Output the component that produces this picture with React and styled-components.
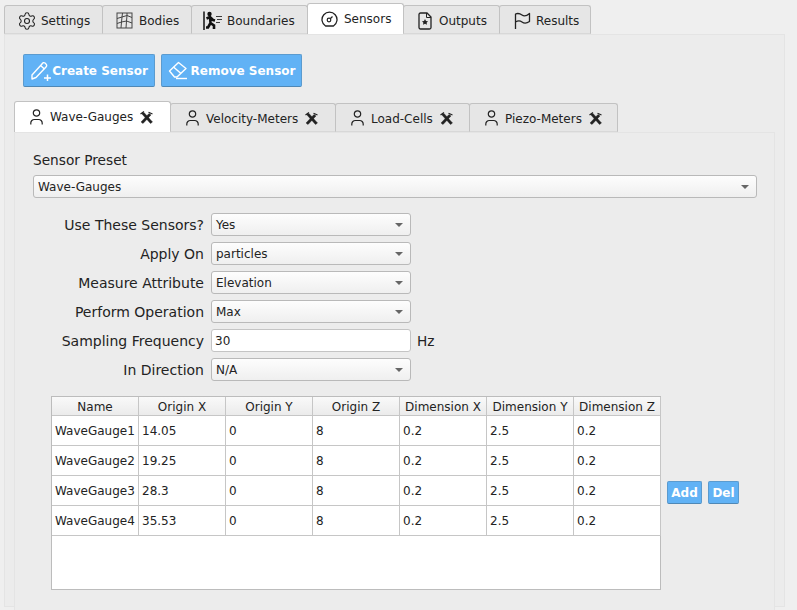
import styled, { createGlobalStyle } from "styled-components";
import { Settings } from "lucide-react";

const GlobalStyle = createGlobalStyle`
  html, body {
    margin: 0;
    height: 100%;
    overflow: hidden;
    background: #efefef;
    font-family: "DejaVu Sans", sans-serif;
    font-size: 12px;
    color: #232323;
  }
`;

const Page = styled.div`
  width: 797px;
  height: 610px;
  padding: 3px 12px 0 4px;
  box-sizing: border-box;
  overflow: hidden;
`;

const TabBar = styled.div`
  display: flex;
  align-items: flex-end;
  height: 31px;
  position: relative;
  z-index: 1;
`;

const Tab = styled.div`
  width: ${(p) => p.$width}px;
  height: ${(p) => (p.$active ? 31 : 29)}px;
  box-sizing: border-box;
  display: flex;
  align-items: center;
  gap: ${(p) => p.$gap || 7}px;
  padding-left: ${(p) => p.$pad || 14}px;
  padding-top: 2px;
  padding-bottom: ${(p) => (p.$active ? 2 : 0)}px;
  background: ${(p) => (p.$active ? "#fff" : "#e6e6e6")};
  border: 1px solid #c2c2c2;
  border-bottom: ${(p) => (p.$active ? "none" : "1px solid #d8d8d8")};
  border-radius: 3px 3px 0 0;
  margin-left: ${(p) => (p.$first ? 0 : -1)}px;
  white-space: nowrap;
  svg {
    flex: none;
  }
`;

const OuterPane = styled.div`
  height: 573px;
  background: #ececec;
  border: 1px solid #e4e4e4;
  box-sizing: border-box;
  padding: 19px 9px 0 9px;
`;

const ActionRow = styled.div`
  display: flex;
  gap: 6px;
  margin-left: 9px;
  margin-bottom: 14px;
`;

const BlueButton = styled.button`
  display: flex;
  align-items: center;
  justify-content: center;
  gap: ${(p) => p.$gap || 0}px;
  width: ${(p) => p.$width}px;
  height: ${(p) => p.$height}px;
  padding: 0;
  background: #61b2f5;
  border: 1px solid #5b9bcf;
  border-bottom-color: #4f88b6;
  border-radius: 2px;
  color: #fff;
  font-family: "DejaVu Sans", sans-serif;
  font-size: 12px;
  font-weight: 700;
`;

const InnerPane = styled.div`
  height: 480px;
  background: #ececec;
  border: 1px solid #e4e4e4;
  box-sizing: border-box;
  padding: 18px 18px 0 18px;
`;

const PresetLabel = styled.div`
  font-size: 13.7px;
  line-height: 18px;
  margin-bottom: 6px;
`;

const Combo = styled.div`
  width: ${(p) => p.$width}px;
  height: 23px;
  box-sizing: border-box;
  display: flex;
  align-items: center;
  justify-content: space-between;
  padding: 0 7px 0 4px;
  font-size: 12px;
  background: linear-gradient(#fdfdfd, #efefef);
  border: 1px solid #b9b9b9;
  border-radius: 3px;
`;

const Arrow = styled.span`
  width: 0;
  height: 0;
  border-left: 4px solid transparent;
  border-right: 4px solid transparent;
  border-top: 4px solid #666;
`;

const FormGrid = styled.div`
  display: grid;
  grid-template-columns: 171px 200px auto;
  column-gap: 7px;
  row-gap: 6px;
  align-items: center;
  margin-top: 15px;
`;

const RowLabel = styled.div`
  text-align: right;
  font-size: 14px;
  white-space: nowrap;
`;

const Input = styled.div`
  height: 23px;
  box-sizing: border-box;
  display: flex;
  align-items: center;
  padding-left: 3px;
  font-size: 12px;
  background: #fff;
  border: 1px solid #c4c4c4;
  border-radius: 3px;
`;

const Unit = styled.div`
  font-size: 13.7px;
  margin-left: -1px;
`;

const TableRow = styled.div`
  display: flex;
  align-items: center;
  gap: 6px;
  margin-top: 15px;
  margin-left: 18px;
`;

const Table = styled.div`
  width: 610px;
  height: 194px;
  box-sizing: border-box;
  background: #fff;
  border: 1px solid #bcbcbc;
  display: grid;
  grid-template-columns: 87px repeat(6, 87px);
  grid-template-rows: 19px repeat(4, 30px);
  align-content: start;
`;

const HeadCell = styled.div`
  display: flex;
  align-items: center;
  justify-content: center;
  padding-top: 1px;
  background: linear-gradient(#f9f9f9, #ebebeb);
  border-right: 1px solid #c6c6c6;
  border-bottom: 1px solid #c6c6c6;
  font-size: 12px;
  white-space: nowrap;
`;

const Cell = styled.div`
  display: flex;
  align-items: center;
  padding-left: 3px;
  border-right: 1px solid #c6c6c6;
  border-bottom: 1px solid #c6c6c6;
  font-size: 12px;
  white-space: nowrap;
`;

const SideButtons = styled.div`
  display: flex;
  gap: 6px;
  margin-bottom: 1px;
`;

const BodiesIcon = () => (
  <svg width="17" height="17" viewBox="0 0 17 17" fill="none" stroke="#444" strokeWidth="1">
    <rect x="1" y="1" width="15" height="15" />
    <path d="M1 6.5 L6 5 L11 3.5 L16 5.5 M1 11.5 L5.5 10 L10.5 9 L16 11 M6.5 1 L6 5 L5.5 10 L5 16 M11 1 L11 3.5 L10.5 9 L10 16" />
  </svg>
);

const BoundariesIcon = () => (
  <svg width="20" height="20" viewBox="0 0 20 20" fill="none" stroke="#111">
    <path d="M1 0.5 V19" strokeWidth="1.5" />
    <circle cx="6.5" cy="3" r="2.2" fill="#111" stroke="none" />
    <path d="M3.5 7.5 L7 6 L10 9 L12 9.5 M7 6 L7.5 12 L11 14.5 L11 18 M7.5 12 L5 16.5 L3 16.5" strokeWidth="2.6" />
    <path d="M13 5.5 H19 M14 8.5 H19 M13 11.5 H17" strokeWidth="0.8" />
  </svg>
);

const SensorIcon = () => (
  <svg width="17" height="17" viewBox="0 0 17 17" fill="none" stroke="#222">
    <path d="M4.5 15 A7.5 7.5 0 1 1 12.5 15 Z" strokeWidth="1.3" strokeLinejoin="round" />
    <circle cx="8" cy="9" r="1.8" strokeWidth="1.2" />
    <path d="M9.5 7.5 L11.5 5.5" strokeWidth="1.2" />
  </svg>
);

const OutputIcon = () => (
  <svg width="14" height="18" viewBox="0 0 14 18" fill="none" stroke="#222">
    <path d="M2.5 1 H9 L13 5 V15.5 A1.5 1.5 0 0 1 11.5 17 H2.5 A1.5 1.5 0 0 1 1 15.5 V2.5 A1.5 1.5 0 0 1 2.5 1 Z" strokeWidth="1.3" />
    <path d="M8.5 1 V5.5 H13" strokeWidth="1" />
    <path d="M7 7 L8 9 L10 9.2 L8.6 10.7 L9 12.8 L7 11.8 L5 12.8 L5.4 10.7 L4 9.2 L6 9 Z" fill="#222" stroke="none" />
  </svg>
);

const FlagIcon = () => (
  <svg width="17" height="18" viewBox="0 0 17 18" fill="none" stroke="#222" strokeWidth="1.3" strokeLinejoin="round">
    <path d="M1.5 17 V2 C4 1 6 1.5 8 3 C10 4.5 12 4.5 15.5 1.5 V9.5 C12 12 10 11.5 8 10 C6 8.5 4 8.5 1.5 10" />
  </svg>
);

const PencilPlusIcon = () => (
  <svg width="22" height="20" viewBox="0 0 22 20" fill="none" stroke="#fff" strokeWidth="1.4" strokeLinejoin="round">
    <path d="M2 14 L12 3 A2 2 0 0 1 15 2 L16 3 A2 2 0 0 1 16 6 L6 16.5 L2 18 Z" />
    <path d="M10.5 4.5 L14.5 8" />
    <path d="M14 17 H21 M17.5 13.5 V20" strokeWidth="1.5" />
  </svg>
);

const EraserIcon = () => (
  <svg width="20" height="19" viewBox="0 0 20 19" fill="none" stroke="#fff" strokeWidth="1.4" strokeLinejoin="round">
    <path d="M1.5 10 L10.5 1.5 L18 7.5 L9 16 H6.5 Z" />
    <path d="M5.5 6 L13 12.5" />
    <path d="M8 17.5 H19" />
  </svg>
);

const PersonIcon = () => (
  <svg width="13" height="17" viewBox="0 0 13 17" fill="none" stroke="#222" strokeWidth="1.2">
    <circle cx="6.5" cy="4" r="3.2" />
    <path d="M0.8 15.5 V14 A3.5 3.5 0 0 1 4.3 10.5 H8.7 A3.5 3.5 0 0 1 12.2 14 V15.5" />
  </svg>
);

const ToolsIcon = () => (
  <svg width="13" height="13" viewBox="0 0 13 13" fill="#222" stroke="#222">
    <path d="M1.5 2.5 L4 1.5 L12.5 11 L10.5 12.5 Z" strokeWidth="0.4" />
    <path d="M9 2.5 L11 4 L3 12.5 L1 11 Z" strokeWidth="0.4" />
    <path d="M0.5 3 L4 0.5 M8.5 1.2 L12.5 3" strokeWidth="1.2" fill="none" />
  </svg>
);

const sensorTabs = [
  { name: "Wave-Gauges", width: 157, active: true },
  { name: "Velocity-Meters", width: 166 },
  { name: "Load-Cells", width: 135 },
  { name: "Piezo-Meters", width: 149 },
];

const formRows = [
  { label: "Use These Sensors?", value: "Yes" },
  { label: "Apply On", value: "particles" },
  { label: "Measure Attribute", value: "Elevation" },
  { label: "Perform Operation", value: "Max" },
  { label: "Sampling Frequency", value: "30", input: true, unit: "Hz" },
  { label: "In Direction", value: "N/A" },
];

const columns = ["Name", "Origin X", "Origin Y", "Origin Z", "Dimension X", "Dimension Y", "Dimension Z"];

const rows = [
  ["WaveGauge1", "14.05"],
  ["WaveGauge2", "19.25"],
  ["WaveGauge3", "28.3"],
  ["WaveGauge4", "35.53"],
];

export default function App() {
  return (
    <Page>
      <GlobalStyle />
      <TabBar>
        <Tab $first $width={99} $gap={4} $pad={12}>
          <Settings size={20} strokeWidth={1.3} color="#222" />
          Settings
        </Tab>
        <Tab $width={90} $gap={6} $pad={13}>
          <BodiesIcon />
          Bodies
        </Tab>
        <Tab $width={117} $gap={4} $pad={11}>
          <BoundariesIcon />
          Boundaries
        </Tab>
        <Tab $width={97} $active $gap={6} $pad={13}>
          <SensorIcon />
          Sensors
        </Tab>
        <Tab $width={97} $gap={7} $pad={14}>
          <OutputIcon />
          Outputs
        </Tab>
        <Tab $width={92} $gap={5} $pad={14}>
          <FlagIcon />
          Results
        </Tab>
      </TabBar>
      <OuterPane>
        <ActionRow>
          <BlueButton $width={132} $height={33}>
            <PencilPlusIcon />
            Create Sensor
          </BlueButton>
          <BlueButton $width={141} $height={33} $gap={3}>
            <EraserIcon />
            Remove Sensor
          </BlueButton>
        </ActionRow>
        <TabBar>
          {sensorTabs.map((tab, i) => (
            <Tab key={tab.name} $first={i === 0} $active={tab.active} $width={tab.width} $pad={15} $gap={7}>
              <PersonIcon />
              {tab.name}
              <ToolsIcon />
            </Tab>
          ))}
        </TabBar>
        <InnerPane>
          <PresetLabel>Sensor Preset</PresetLabel>
          <Combo $width={724}>
            Wave-Gauges
            <Arrow />
          </Combo>
          <FormGrid>
            {formRows.map((row) => (
              <FormRow key={row.label} row={row} />
            ))}
          </FormGrid>
          <TableRow>
            <Table>
              {columns.map((c) => (
                <HeadCell key={c}>{c}</HeadCell>
              ))}
              {rows.map(([name, x]) => (
                <TableLine key={name} name={name} x={x} />
              ))}
            </Table>
            <SideButtons>
              <BlueButton $width={35} $height={23}>Add</BlueButton>
              <BlueButton $width={31} $height={23}>Del</BlueButton>
            </SideButtons>
          </TableRow>
        </InnerPane>
      </OuterPane>
    </Page>
  );
}

function FormRow({ row }) {
  return (
    <>
      <RowLabel>{row.label}</RowLabel>
      {row.input ? (
        <Input>{row.value}</Input>
      ) : (
        <Combo $width={200}>
          {row.value}
          <Arrow />
        </Combo>
      )}
      <Unit>{row.unit}</Unit>
    </>
  );
}

function TableLine({ name, x }) {
  const values = [name, x, "0", "8", "0.2", "2.5", "0.2"];
  return values.map((v, i) => <Cell key={i}>{v}</Cell>);
}
